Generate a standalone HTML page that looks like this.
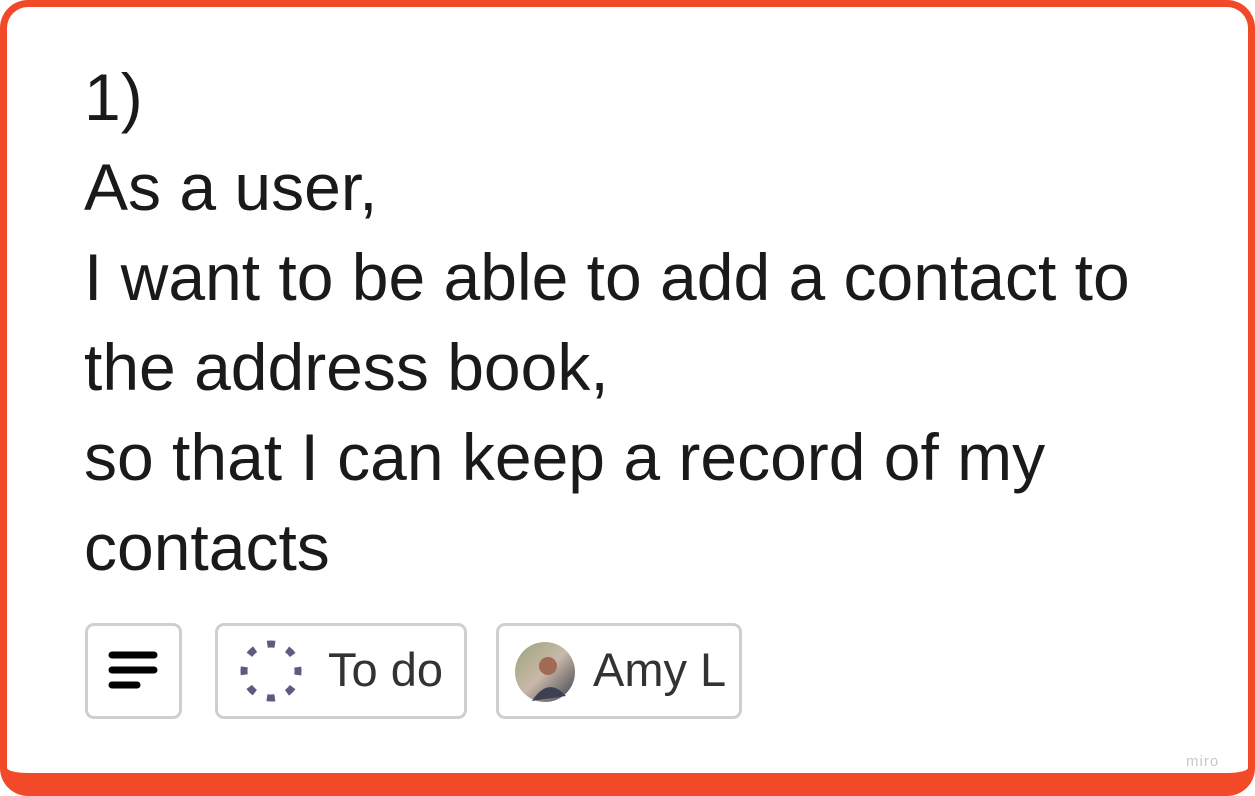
<!DOCTYPE html>
<html><head><style>
html,body{margin:0;padding:0;width:1255px;height:796px;overflow:hidden;background:#fff;font-family:"Liberation Sans",sans-serif}
.card{position:absolute;left:0;top:0;width:1255px;height:796px;box-sizing:border-box;border:7px solid #f24a28;border-bottom-width:23px;border-radius:28px;background:#fff}
.txt{position:absolute;left:84px;top:52px;font-size:66px;line-height:90px;color:#1a1a1a;white-space:pre;letter-spacing:0px}
.btn{position:absolute;top:623px;height:96px;box-sizing:border-box;border:3px solid #cfcfcf;border-radius:9px;background:#fff;font-size:47px;color:#333}
.miro{position:absolute;left:1186px;top:753px;font-size:15px;color:#c8c8c8;letter-spacing:1px}
</style></head><body>
<div class="card"></div>
<div class="txt">1)
As a user,
I want to be able to add a contact to
the address book,
so that I can keep a record of my
contacts</div>
<div class="btn" style="left:85px;width:97px">
<svg width="97" height="96" style="position:absolute;left:-3px;top:-3px"><g stroke="#000" stroke-width="7" stroke-linecap="round"><line x1="27" y1="32" x2="69" y2="32"/><line x1="27" y1="47" x2="69" y2="47"/><line x1="27" y1="62" x2="52" y2="62"/></g></svg>
</div>
<div class="btn" style="left:215px;width:252px">
<svg width="70" height="96" style="position:absolute;left:18px;top:-3px"><circle cx="35" cy="48" r="27" fill="none" stroke="#5e5a80" stroke-width="7" stroke-dasharray="8 13.2" stroke-dashoffset="4" transform="rotate(-90 35 48)"/></svg>
<span style="position:absolute;left:110px;top:16px">To do</span>
</div>
<div class="btn" style="left:496px;width:246px">
<svg width="62" height="62" style="position:absolute;left:15px;top:15px"><defs><linearGradient id="g" x1="0" y1="0" x2="1" y2="1"><stop offset="0" stop-color="#9aa37a"/><stop offset="0.5" stop-color="#c9b8a8"/><stop offset="1" stop-color="#3a3c4a"/></linearGradient></defs><circle cx="31" cy="31" r="30" fill="url(#g)"/><circle cx="34" cy="25" r="9" fill="#a06a55"/><path d="M18 60 Q34 35 52 55 Z" fill="#3d3f52"/></svg>
<span style="position:absolute;left:94px;top:16px">Amy L</span>
</div>
<div class="miro">miro</div>
</body></html>
